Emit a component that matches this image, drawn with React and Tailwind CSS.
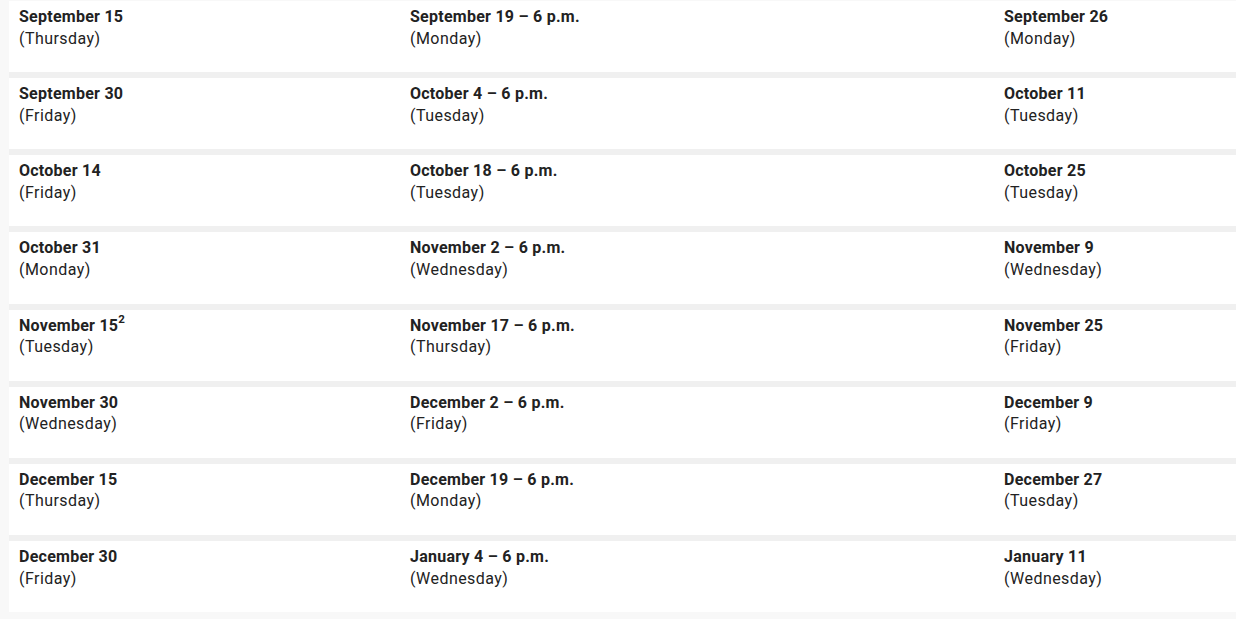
import React from "react";

const rows = [
  [["September 15", "Thursday"], ["September 19 – 6 p.m.", "Monday"], ["September 26", "Monday"]],
  [["September 30", "Friday"], ["October 4 – 6 p.m.", "Tuesday"], ["October 11", "Tuesday"]],
  [["October 14", "Friday"], ["October 18 – 6 p.m.", "Tuesday"], ["October 25", "Tuesday"]],
  [["October 31", "Monday"], ["November 2 – 6 p.m.", "Wednesday"], ["November 9", "Wednesday"]],
  [["November 15", "Tuesday", "2"], ["November 17 – 6 p.m.", "Thursday"], ["November 25", "Friday"]],
  [["November 30", "Wednesday"], ["December 2 – 6 p.m.", "Friday"], ["December 9", "Friday"]],
  [["December 15", "Thursday"], ["December 19 – 6 p.m.", "Monday"], ["December 27", "Tuesday"]],
  [["December 30", "Friday"], ["January 4 – 6 p.m.", "Wednesday"], ["January 11", "Wednesday"]],
];

function Cell({ c }) {
  return (
    <div className="px-[10px] pt-[5px]">
      <div className="font-bold tracking-[0.25px]">
        {c[0]}
        {c[2] && (
          <span className="relative -top-[8px] text-[11.5px] font-bold leading-none tracking-normal">{c[2]}</span>
        )}
      </div>
      <div className="tracking-[0.45px] mt-[0.6px]">({c[1]})</div>
    </div>
  );
}

export default function App() {
  return (
    <div
      className="w-[1236px] h-[619px] bg-[#f8f8f8] pl-[9px] pt-[1px] text-[16px] leading-[21px] text-[#222]"
      style={{ fontFamily: "Roboto, 'Liberation Sans', sans-serif" }}
    >
      <div className="flex flex-col gap-[6px] bg-[#f0f0f0]">
        {rows.map((r, i) => (
          <div key={i} className="grid grid-cols-[391px_594px_1fr] h-[71.15px] bg-white">
            {r.map((c, j) => (
              <Cell key={j} c={c} />
            ))}
          </div>
        ))}
      </div>
    </div>
  );
}
